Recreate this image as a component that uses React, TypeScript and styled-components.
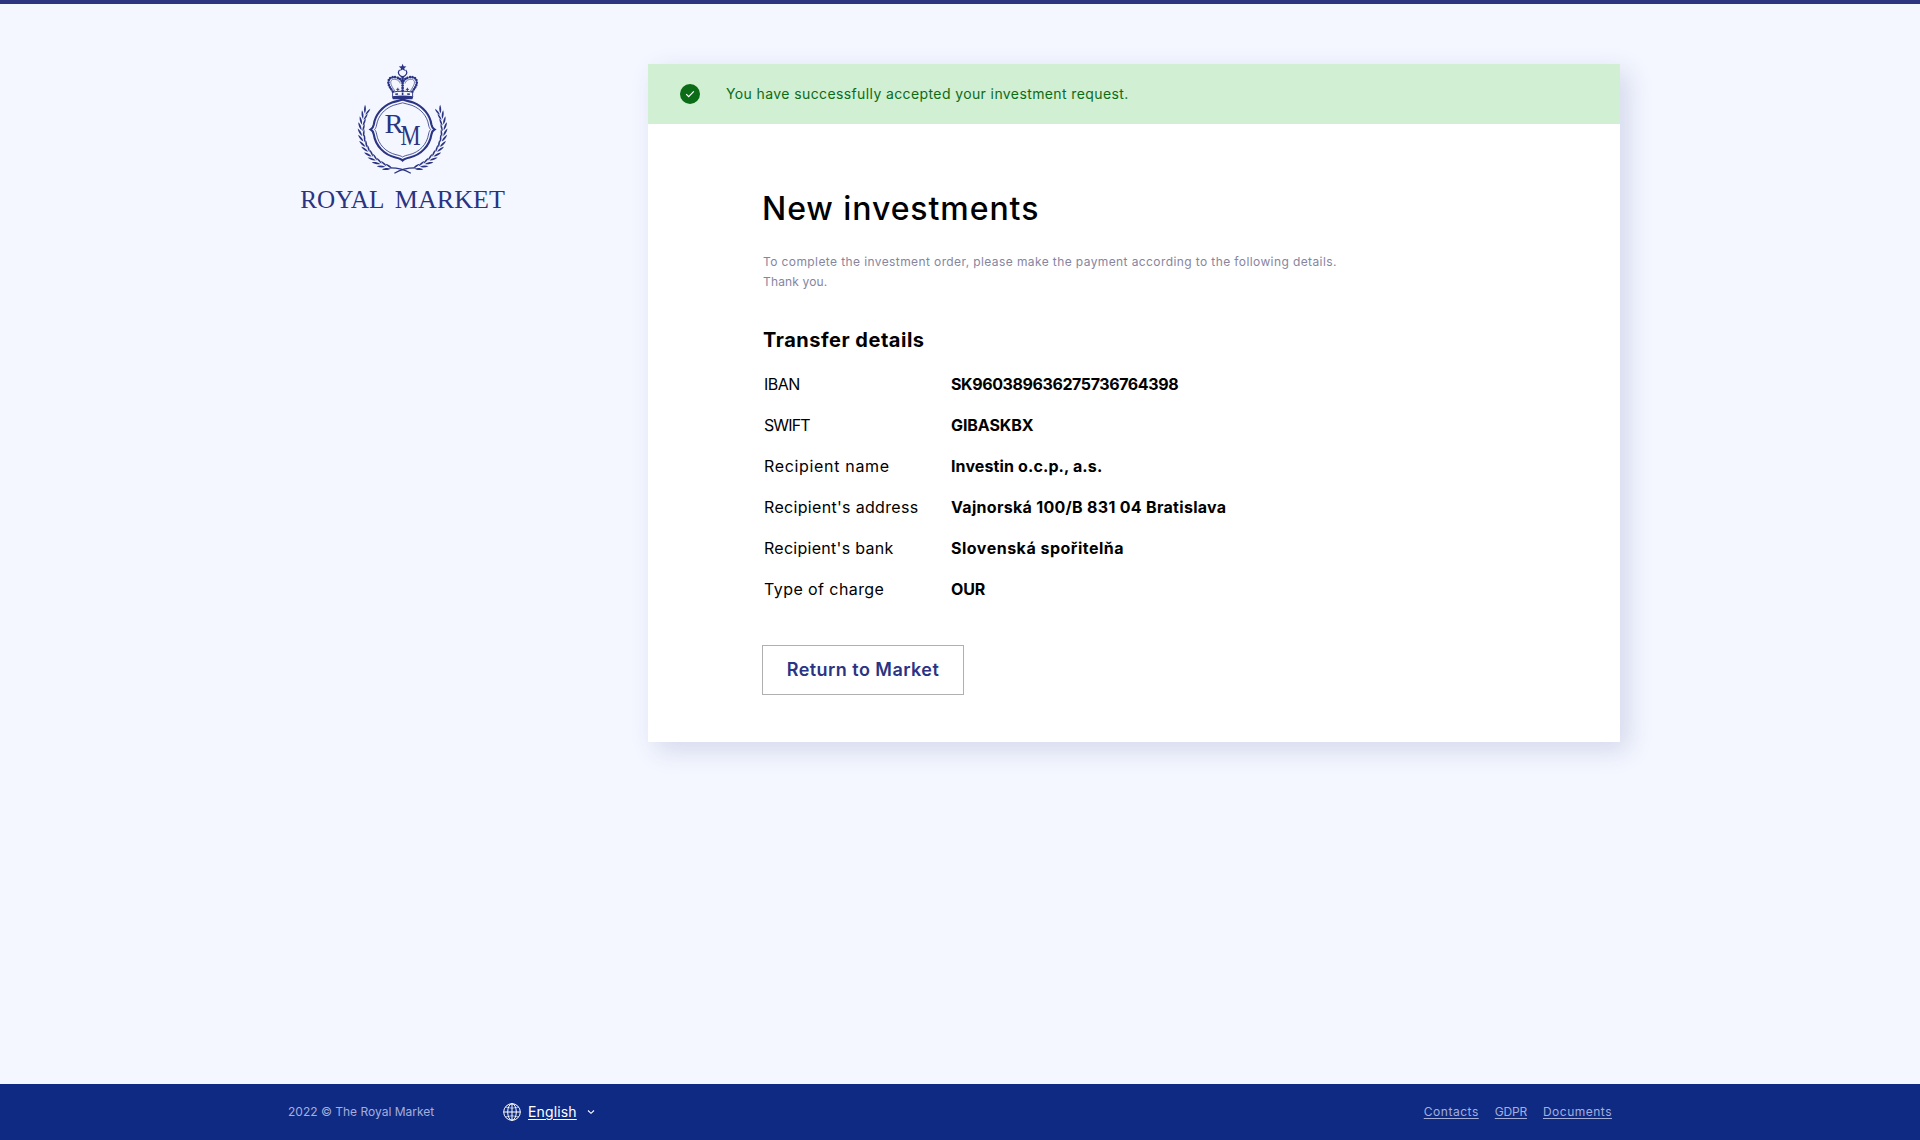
import React from 'react';
import styled, { createGlobalStyle } from 'styled-components';

const navy = '#2a3482';

const GlobalStyle = createGlobalStyle`
  *, *::before, *::after { box-sizing: border-box; }
  body {
    margin: 0;
    background: #f4f7ff;
    color: #000;
    font-family: Inter, "Open Sans", sans-serif;
  }
`;

const Page = styled.div`
  display: flex;
  flex-direction: column;
  min-height: 1140px;
  border-top: 4px solid #2d3580;
`;

const Content = styled.div`
  flex: 1;
  display: flex;
  align-items: flex-start;
  width: 1332px;
  margin: 0 auto;
  padding-top: 60px;
  padding-left: 6px;
`;

const Brand = styled.a`
  width: 348px;
  flex: none;
  svg { display: block; margin-top: -14px; margin-left: -10px; }
`;

const Card = styled.main`
  width: 972px;
  height: 678px;
  background: #fff;
  box-shadow: 8px 8px 24px rgba(45, 53, 131, 0.16);
`;

const Banner = styled.div`
  display: flex;
  align-items: center;
  height: 60px;
  padding-left: 32px;
  gap: 26px;
  background: #d0efd3;
  color: #0c6b16;
  font-size: 14px;
  line-height: 18px;
`;

const BannerText = styled.span`
  letter-spacing: 0.39px;
  padding-bottom: 1px;
`;

const Tracked = styled.span<{ $track?: number }>`
  letter-spacing: ${(p) => p.$track ?? 0}px;
  white-space: nowrap;
`;

const Body = styled.div`
  display: flex;
  flex-direction: column;
  align-items: flex-start;
  padding: 61px 114px 0;
`;

const Title = styled.h1`
  margin: 0 0 19px;
  font-size: 32px;
  line-height: 48px;
  font-weight: 500;
  letter-spacing: 0.93px;
`;

const Intro = styled.p`
  margin: 0 0 33px 1px;
  font-size: 12px;
  line-height: 20px;
  color: #85859f;
`;

const SubTitle = styled.h2`
  margin: 0 0 8px 1px;
  font-size: 20px;
  line-height: 30px;
  font-weight: 700;
  letter-spacing: 0.52px;
`;

const Details = styled.dl`
  display: grid;
  grid-template-columns: 187px auto;
  grid-auto-rows: 41px;
  align-items: center;
  margin: 0 0 36px 2px;
  font-size: 16px;
`;

const Label = styled.dt<{ $track: number }>`
  letter-spacing: ${(p) => p.$track}px;
`;

const Value = styled.dd<{ $track: number }>`
  margin: 0;
  font-weight: 700;
  white-space: nowrap;
  letter-spacing: ${(p) => p.$track}px;
`;

const ReturnButton = styled.button`
  width: 202px;
  height: 50px;
  padding: 0 0 1px;
  border: 1px solid #b0b0b0;
  background: #fff;
  color: ${navy};
  font-family: inherit;
  font-size: 18px;
  font-weight: 600;
  letter-spacing: 0.45px;
`;

const FooterBar = styled.footer`
  height: 56px;
  background: #0f2a83;
`;

const FooterInner = styled.div`
  display: flex;
  align-items: center;
  width: 1344px;
  height: 100%;
  margin: 0 auto;
  font-size: 12px;
  color: #a4aedb;
`;

const Copyright = styled.span`
  width: 215px;
  padding-bottom: 1px;
`;

const Language = styled.button`
  display: flex;
  align-items: center;
  padding: 0;
  border: 0;
  background: none;
  color: #fff;
  font: 14px Inter, sans-serif;
`;

const LanguageName = styled.span`
  margin: 0 10px 0 7px;
  padding-bottom: 1px;
  letter-spacing: 0.15px;
  text-decoration: underline;
  text-underline-offset: 2px;
`;

const Links = styled.nav`
  display: flex;
  gap: 16px;
  margin-left: auto;
  padding: 0 20px 1px 0;
`;

const FooterLink = styled.a<{ $track: number }>`
  color: inherit;
  letter-spacing: ${(p) => p.$track}px;
  text-decoration: underline;
  text-underline-offset: 2px;
`;

const details: { label: string; lt: number; value: string; vt: number }[] = [
  { label: 'IBAN', lt: -0.5, value: 'SK960389636275736764398', vt: -0.4 },
  { label: 'SWIFT', lt: -0.9, value: 'GIBASKBX', vt: -0.1 },
  { label: 'Recipient name', lt: 0.67, value: 'Investin o.c.p., a.s.', vt: 0.12 },
  { label: "Recipient's address", lt: 0.32, value: 'Vajnorská 100/B 831 04 Bratislava', vt: 0.3 },
  { label: "Recipient's bank", lt: 0.28, value: 'Slovenská spořitelňa', vt: 0.5 },
  { label: 'Type of charge', lt: 0.42, value: 'OUR', vt: -0.1 },
];

const CX = 112.6;
const CY = 79.5;

function Branch() {
  const steps = Array.from({ length: 13 }, (_, i) => 107 + i * 8);
  return (
    <g>
      {steps.map((deg) => {
        const a = (deg * Math.PI) / 180;
        const x = CX + 41 * Math.cos(a);
        const y = CY + 41 * Math.sin(a);
        return (
          <g key={deg} transform={`translate(${x} ${y}) rotate(${deg + 90})`}>
            <path d="M0 0C1.5 -2 4.5 -3.2 8 -3.2C6.5 -1.4 3.5 0.2 0 0Z" />
            <path d="M-1 0.8C1 0.7 4.500 1.3 6.500 3.100C3.800 3.600 0.500 2.700 -1 0.800Z" />
          </g>
        );
      })}
      <path d="M99.5 117.8Q111.500 117.600 120.800 123.200" fill="none" stroke={navy} strokeWidth="1.2" />
    </g>
  );
}

function CrownHalf() {
  return (
    <g fill="none" stroke={navy}>
      <path
        d="M102.800 41.500C100.800 38 98.300 36 98.400 32C98.500 28 102 26.600 105.500 27.200C109 27.800 111 29.500 112 31.500"
        strokeWidth="2.6"
        strokeLinecap="round"
        strokeDasharray="0.01 2.5"
      />
      <path
        d="M104.800 41C102.800 37.500 100.600 35 100.700 32C101 29.300 103.500 28.900 106 29.500C108.500 30.100 109.800 31.700 110.200 33.500"
        strokeWidth="0.6"
      />
      <path d="M102 42.200Q107 41.200 112.600 41.200" strokeWidth="1" />
      <path d="M102.600 42.500V46" strokeWidth="0.9" />
      <path d="M105.300 44.300L108 43.900" strokeWidth="1.5" />
      <path d="M107.800 41V37.800M106.300 39.400H109.300" strokeWidth="0.9" />
    </g>
  );
}

const mirror = `matrix(-1 0 0 1 ${CX * 2} 0)`;

function Logo() {
  return (
    <svg width="230" height="170" viewBox="0 0 230 170" fill={navy} role="img">
      <path d="M112.600 13.700L113.600 16.300L116.400 16.500L114.300 18.200L115 21L112.600 19.500L110.200 21L110.900 18.200L108.800 16.500L111.600 16.300Z" />
      <path d="M109.600 19.800A4 4 0 1 0 115.600 19.800" fill="none" stroke={navy} strokeWidth="1.2" />
      <CrownHalf />
      <g transform={mirror}>
        <CrownHalf />
      </g>
      <path
        d="M112.600 28V41"
        fill="none"
        stroke={navy}
        strokeWidth="2.8"
        strokeLinecap="round"
        strokeDasharray="0.01 2.5"
      />
      <path d="M112.600 42.500V45" stroke={navy} strokeWidth="1.6" />
      <path d="M101.800 46.200Q112.600 44.600 123.400 46.200L122.400 49.200L116 49.200L112.600 50.600L109.200 49.200L102.800 49.200Z" />
      <g fill="none" stroke={navy}>
        <path
          d="M112.600 49.600C109 51 105.500 51.200 102 52.500C92 56.500 85.200 65 83.800 74.500C83.300 77 82.300 78.600 80.700 79.500C82.300 80.400 83.300 82 83.800 84.500C85.500 95.500 94 104.800 105.500 107.500C109 108.300 111.200 109 112.600 110.500C114 109 116.200 108.300 119.700 107.500C131.200 104.800 139.700 95.500 141.400 84.500C141.900 82 142.900 80.400 144.500 79.500C142.900 78.600 141.900 77 141.400 74.500C140 65 133.200 56.500 123.200 52.500C119.700 51.200 116.200 51 112.600 49.600Z"
          strokeWidth="2.1"
        />
        <path
          d="M112.600 52.800C109 54.100 106 54.300 103.200 55.400C94 59 88 66.300 86.600 75C86.200 77 85.600 78.500 84.600 79.500C85.600 80.500 86.200 82 86.600 84C88.200 94.500 96 102.300 106 104.700C109 105.400 111.200 106 112.600 107C114 106 116.200 105.400 119.200 104.700C129.200 102.300 137 94.500 138.600 84C139 82 139.600 80.500 140.600 79.500C139.600 78.500 139 77 138.600 75C137.200 66.300 131.200 59 122 55.400C119.200 54.300 116.200 54.100 112.600 52.800Z"
          strokeWidth="0.8"
        />
      </g>
      <Branch />
      <g transform={mirror}>
        <Branch />
      </g>
      <g fontFamily="'Liberation Serif', serif">
        <text x="94.500" y="83.300" fontSize="28" textLength="19" lengthAdjust="spacingAndGlyphs">R</text>
        <text x="110.500" y="94.700" fontSize="29" textLength="20" lengthAdjust="spacingAndGlyphs">M</text>
        <text x="10.300" y="157.600" fontSize="26" textLength="84" lengthAdjust="spacingAndGlyphs">ROYAL</text>
        <text x="104.800" y="157.600" fontSize="26" textLength="110" lengthAdjust="spacingAndGlyphs">MARKET</text>
      </g>
    </svg>
  );
}

function CheckBadge() {
  return (
    <svg width="20" height="20" viewBox="0 0 20 20">
      <circle cx="10" cy="10" r="10" fill="#0c6b16" />
      <path d="M6.200 10.200L8.700 12.700L13.800 7.400" fill="none" stroke="#fff" strokeWidth="1.2" />
    </svg>
  );
}

function Globe() {
  return (
    <svg width="18" height="18" viewBox="0 0 18 18" fill="none" stroke="#fff" strokeWidth="1">
      <circle cx="9" cy="9" r="8.3" />
      <ellipse cx="9" cy="9" rx="4.3" ry="8.3" />
      <path d="M9 0.700V17.300M0.700 9H17.300" />
      <path d="M2.500 4.200Q9 6.200 15.500 4.200M2.500 13.800Q9 11.800 15.500 13.800" strokeWidth="0.6" />
    </svg>
  );
}

export default function App() {
  return (
    <Page>
      <GlobalStyle />
      <Content>
        <Brand>
          <Logo />
        </Brand>
        <Card>
          <Banner>
            <CheckBadge />
            <BannerText>You have successfully accepted your investment request.</BannerText>
          </Banner>
          <Body>
            <Title>New investments</Title>
            <Intro>
              <Tracked $track={0.4}>
                To complete the investment order, please make the payment according to the following details.
              </Tracked>
              <br />
              <Tracked $track={0.15}>Thank you.</Tracked>
            </Intro>
            <SubTitle>Transfer details</SubTitle>
            <Details>
              {details.map((d) => (
                <React.Fragment key={d.label}>
                  <Label $track={d.lt}>{d.label}</Label>
                  <Value $track={d.vt}>{d.value}</Value>
                </React.Fragment>
              ))}
            </Details>
            <ReturnButton>Return to Market</ReturnButton>
          </Body>
        </Card>
      </Content>
      <FooterBar>
        <FooterInner>
          <Copyright>2022 © The Royal Market</Copyright>
          <Language>
            <Globe />
            <LanguageName>English</LanguageName>
            <svg width="8" height="6" viewBox="0 0 8 6" fill="none" stroke="#fff" strokeWidth="1.1">
              <path d="M1 1.500L4 4.300L7 1.500" />
            </svg>
          </Language>
          <Links>
            <FooterLink $track={0.53}>Contacts</FooterLink>
            <FooterLink $track={-0.2}>GDPR</FooterLink>
            <FooterLink $track={0.5}>Documents</FooterLink>
          </Links>
        </FooterInner>
      </FooterBar>
    </Page>
  );
}
